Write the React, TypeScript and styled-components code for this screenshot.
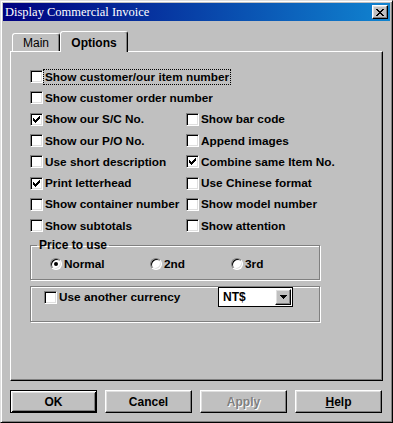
import React from "react";
import styled, { createGlobalStyle, css } from "styled-components";

const GlobalStyle = createGlobalStyle`
  body {
    margin: 0;
    background: #c0c0c0;
    font-family: "Liberation Sans", Arial, sans-serif;
  }
`;

const raised = css`
  border-style: solid;
  border-width: 1px;
  border-color: #ffffff #000000 #000000 #ffffff;
  box-shadow: inset -1px -1px #808080, inset 1px 1px #dfdfdf;
`;

const Window = styled.div`
  box-sizing: border-box;
  width: 393px;
  height: 423px;
  background: #c0c0c0;
  border: 1px solid;
  border-color: #dfdfdf #000000 #000000 #dfdfdf;
  box-shadow: inset 1px 1px #ffffff, inset -1px -1px #808080;
  padding: 2px;
  display: flex;
  flex-direction: column;
`;

const TitleBar = styled.div`
  height: 18px;
  display: flex;
  align-items: center;
  justify-content: space-between;
  padding: 0 2px 0 2px;
  background: linear-gradient(to right, #000080, #1084d0);
`;

const Title = styled.span`
  font-family: "Liberation Serif", "Times New Roman", serif;
  font-size: 12.5px;
  color: #ffffff;
  white-space: nowrap;
`;

const CloseButton = styled.div`
  box-sizing: border-box;
  width: 16px;
  height: 14px;
  background: #c0c0c0;
  ${raised};
  display: flex;
  align-items: center;
  justify-content: center;
`;

const Body = styled.div`
  padding: 10px 7px 0 7px;
  display: flex;
  flex-direction: column;
`;

const TabRow = styled.div`
  display: flex;
  align-items: flex-end;
  height: 20px;
  padding-left: 2px;
`;

const Tab = styled.div<{ $active?: boolean }>`
  box-sizing: border-box;
  position: relative;
  display: flex;
  align-items: center;
  justify-content: center;
  background: #c0c0c0;
  border-style: solid;
  border-color: #ffffff #000000 transparent #ffffff;
  border-width: 1px 1px 0 1px;
  border-radius: 3px 3px 0 0;
  box-shadow: inset -1px 0 #808080;
  font-size: 12px;
  color: #000;
  width: ${({ $active }) => ($active ? 68 : 48)}px;
  height: ${({ $active }) => ($active ? 21 : 18)}px;
  font-weight: ${({ $active }) => ($active ? "bold" : "normal")};
  margin-bottom: ${({ $active }) => ($active ? -1 : 0)}px;
  z-index: ${({ $active }) => ($active ? 2 : 0)};
  padding-top: ${({ $active }) => ($active ? 1 : 0)}px;
`;

const Panel = styled.div`
  box-sizing: border-box;
  height: 330px;
  border-style: solid;
  border-width: 1px;
  border-color: #ffffff #000000 #000000 #ffffff;
  box-shadow: inset -1px -1px #808080;
  padding: 14px 0 0 19px;
  display: flex;
  flex-direction: column;
`;

const OptionGrid = styled.div`
  display: grid;
  grid-template-columns: 156px auto;
  grid-auto-rows: 21.3px;
`;

const Option = styled.label<{ $wide?: boolean }>`
  display: flex;
  align-items: center;
  grid-column: ${({ $wide }) => ($wide ? "1 / span 2" : "auto")};
`;

const Box = styled.span`
  box-sizing: border-box;
  flex: none;
  width: 13px;
  height: 13px;
  background: #ffffff;
  border: 1px solid;
  border-color: #808080 #ffffff #ffffff #808080;
  box-shadow: inset 1px 1px #000000, inset -1px -1px #dfdfdf;
  display: flex;
  align-items: center;
  justify-content: center;
`;

const Text = styled.span<{ $focus?: boolean }>`
  font-size: 11.8px;
  font-weight: bold;
  color: #000;
  white-space: nowrap;
  padding: 0 1px;
  border: 1px dotted ${({ $focus }) => ($focus ? "#000" : "transparent")};
`;

const Group = styled.fieldset<{ $gap: number; $height: number }>`
  box-sizing: border-box;
  width: 290px;
  height: ${({ $height }) => $height}px;
  margin: ${({ $gap }) => $gap}px 0 0 0;
  padding: 0 0 0 19px;
  border: 1px solid #808080;
  box-shadow: inset 1px 1px #ffffff, 1px 1px #ffffff;
  display: block;
`;

const Legend = styled.legend`
  font-size: 12px;
  font-weight: bold;
  padding: 0 2px;
  margin-left: -13px;
  line-height: 14px;
`;

const RadioRow = styled.div`
  display: grid;
  grid-template-columns: 100px 81px auto;
  margin-top: 4px;
`;

const Radio = styled.span`
  box-sizing: border-box;
  width: 12px;
  height: 12px;
  border-radius: 50%;
  background: #ffffff;
  border: 1px solid;
  border-color: #808080 #ffffff #ffffff #808080;
  box-shadow: inset 1px 1px #000000, inset -1px -1px #dfdfdf;
  display: flex;
  align-items: center;
  justify-content: center;
  flex: none;
`;

const Dot = styled.span`
  width: 4px;
  height: 4px;
  border-radius: 50%;
  background: #000;
`;

const CurrencyRow = styled.div`
  display: flex;
  align-items: center;
  height: 100%;
  margin-left: -6px;
`;

const Select = styled.div`
  box-sizing: border-box;
  margin-left: auto;
  margin-right: 26px;
  width: 75px;
  height: 20px;
  background: #ffffff;
  border: 1px solid #000;
  display: flex;
  align-items: center;
  justify-content: space-between;
  padding: 1px;
  font-size: 12px;
  font-weight: bold;
`;

const SelectValue = styled.span`
  padding-left: 3px;
`;

const ArrowButton = styled.span`
  box-sizing: border-box;
  width: 16px;
  height: 16px;
  background: #c0c0c0;
  ${raised};
  display: flex;
  align-items: center;
  justify-content: center;
`;

const ButtonRow = styled.div`
  display: grid;
  grid-template-columns: repeat(4, 87px);
  column-gap: 8px;
  margin-top: 9px;
`;

const Button = styled.div<{ $default?: boolean; $disabled?: boolean }>`
  box-sizing: border-box;
  height: 23px;
  display: flex;
  align-items: center;
  justify-content: center;
  font-size: 12px;
  font-weight: bold;
  background: #c0c0c0;
  ${({ $default }) =>
    $default
      ? css`
          border: 1px solid #000;
          box-shadow: inset 1px 1px #ffffff, inset -1px -1px #000000,
            inset 2px 2px #dfdfdf, inset -2px -2px #808080;
        `
      : raised};
  color: ${({ $disabled }) => ($disabled ? "#808080" : "#000")};
  text-shadow: ${({ $disabled }) => ($disabled ? "1px 1px #ffffff" : "none")};
`;

const Check = () => (
  <svg width="7" height="7" viewBox="0 0 7 7" shapeRendering="crispEdges">
    <path
      fill="#000"
      d="M6 0h1v1h-1z M5 1h2v1h-2z M0 2h1v1h-1z M4 2h3v1h-3z M0 3h2v1h-2z M3 3h3v1h-3z M0 4h5v1h-5z M1 5h3v1h-3z M2 6h1v1h-1z"
    />
  </svg>
);

const CloseGlyph = () => (
  <svg width="8" height="7" viewBox="0 0 8 7" shapeRendering="crispEdges">
    <path
      fill="#000"
      d="M0 0h2v1h-2z M6 0h2v1h-2z M1 1h2v1h-2z M5 1h2v1h-2z M2 2h4v1h-4z M3 3h2v1h-2z M2 4h4v1h-4z M1 5h2v1h-2z M5 5h2v1h-2z M0 6h2v1h-2z M6 6h2v1h-2z"
    />
  </svg>
);

const DownArrow = () => (
  <svg width="7" height="4" viewBox="0 0 7 4" shapeRendering="crispEdges">
    <path fill="#000" d="M0 0h7v1h-7z M1 1h5v1h-5z M2 2h3v1h-3z M3 3h1v1h-1z" />
  </svg>
);

type Opt = { label: string; checked?: boolean; wide?: boolean; focus?: boolean };

const options: Opt[] = [
  { label: "Show customer/our item number", wide: true, focus: true },
  { label: "Show customer order number", wide: true },
  { label: "Show our S/C No.", checked: true },
  { label: "Show bar code" },
  { label: "Show our P/O No." },
  { label: "Append images" },
  { label: "Use short description" },
  { label: "Combine same Item No.", checked: true },
  { label: "Print letterhead", checked: true },
  { label: "Use Chinese format" },
  { label: "Show container number" },
  { label: "Show model number" },
  { label: "Show subtotals" },
  { label: "Show attention" },
];

const prices = [
  { label: "Normal", selected: true },
  { label: "2nd" },
  { label: "3rd" },
];

export default function App() {
  return (
    <>
      <GlobalStyle />
      <Window>
        <TitleBar>
          <Title>Display Commercial Invoice</Title>
          <CloseButton>
            <CloseGlyph />
          </CloseButton>
        </TitleBar>
        <Body>
          <TabRow>
            <Tab>Main</Tab>
            <Tab $active>Options</Tab>
          </TabRow>
          <Panel>
            <OptionGrid>
              {options.map((o) => (
                <Option key={o.label} $wide={o.wide}>
                  <Box>{o.checked && <Check />}</Box>
                  <Text $focus={o.focus}>{o.label}</Text>
                </Option>
              ))}
            </OptionGrid>
            <Group $gap={2} $height={42}>
              <Legend>Price to use</Legend>
              <RadioRow>
                {prices.map((p) => (
                  <Option key={p.label}>
                    <Radio>{p.selected && <Dot />}</Radio>
                    <Text>{p.label}</Text>
                  </Option>
                ))}
              </RadioRow>
            </Group>
            <Group $gap={6} $height={36}>
              <CurrencyRow>
                <Option>
                  <Box />
                  <Text>Use another currency</Text>
                </Option>
                <Select>
                  <SelectValue>NT$</SelectValue>
                  <ArrowButton>
                    <DownArrow />
                  </ArrowButton>
                </Select>
              </CurrencyRow>
            </Group>
          </Panel>
          <ButtonRow>
            <Button $default>OK</Button>
            <Button>Cancel</Button>
            <Button $disabled>Apply</Button>
            <Button>
              <span>
                <u>H</u>elp
              </span>
            </Button>
          </ButtonRow>
        </Body>
      </Window>
    </>
  );
}
